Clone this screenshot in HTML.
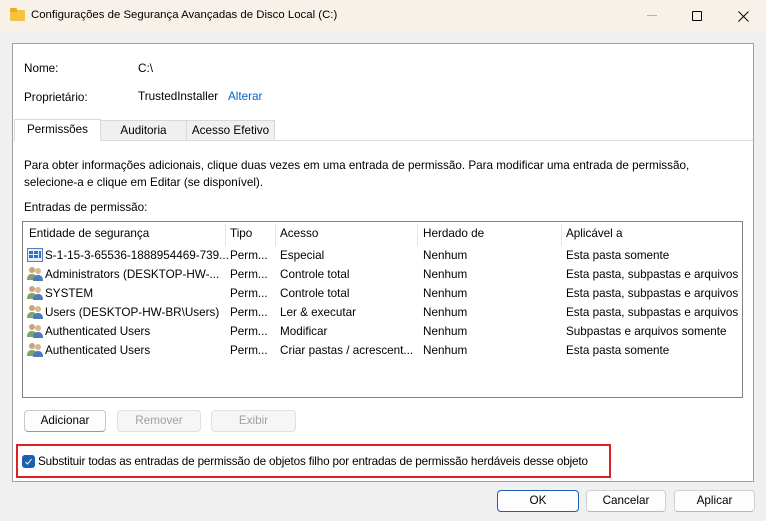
<!DOCTYPE html>
<html><head><meta charset="utf-8">
<style>
*{box-sizing:border-box;margin:0;padding:0}
body{width:766px;height:521px;overflow:hidden;background:#f0f0f0;font-family:"Liberation Sans",sans-serif;font-size:11.7px;color:#000;position:relative}
.a{position:absolute;white-space:nowrap}
.title{left:0;top:0;width:766px;height:32px;background:#f8f1ea}
.panel{left:12px;top:43px;width:742px;height:439px;background:#fff;border:1px solid #a0a0a0}
.btn{position:absolute;height:22px;border:1px solid #d0d0d0;border-radius:4px;background:#fdfdfd;text-align:center;line-height:20px;border-bottom-color:#b8b8b8}
.dis{color:#a0a0a0;border-color:#e0e0e0;background:#f6f6f6}
.tab{position:absolute;top:120px;height:21px;line-height:20px;background:#f0f0f0;border:1px solid #d9d9d9;text-align:center}
.list{left:22px;top:221px;width:721px;height:177px;border:1px solid #828282;background:#fff}
.row{position:absolute;left:0;height:19px;line-height:19px}
</style></head><body>
<div class="a title"></div>
<div class="a" style="left:10px;top:10px;width:15px;height:11px;background:#f5c242;border-radius:1px"></div>
<div class="a" style="left:10px;top:8px;width:7px;height:4px;background:#e9ac25;border-radius:1px 1px 0 0"></div>
<div class="a" style="left:31px;top:9px;font-size:11.4px">Configurações de Segurança Avançadas de Disco Local (C:)</div>
<div class="a" style="left:647px;top:15px;width:10px;height:1px;background:#b0b0b0"></div>
<div class="a" style="left:692px;top:11px;width:10px;height:10px;border:1px solid #000;border-radius:1px"></div>
<svg class="a" style="left:738px;top:11px" width="11" height="11"><path d="M0.5 0.5L10.5 10.5M10.5 0.5L0.5 10.5" stroke="#000" stroke-width="1"/></svg>

<div class="a panel"></div>
<div class="a" style="left:24px;top:62px">Nome:</div>
<div class="a" style="left:138px;top:62px">C:\</div>
<div class="a" style="left:24px;top:91px">Proprietário:</div>
<div class="a" style="left:138px;top:90px">TrustedInstaller</div>
<div class="a" style="left:228px;top:90px;color:#0066cc">Alterar</div>

<div class="a" style="left:13px;top:140px;width:740px;height:1px;background:#d9d9d9"></div>
<div class="tab" style="left:100px;width:87px">Auditoria</div>
<div class="tab" style="left:186px;width:89px">Acesso Efetivo</div>
<div class="tab" style="left:14px;width:87px;background:#fff;border-bottom-color:#fff;top:119px;height:22px">Permissões</div>

<div class="a" style="left:24px;top:157px;line-height:17px">Para obter informações adicionais, clique duas vezes em uma entrada de permissão. Para modificar uma entrada de permissão,<br>selecione-a e clique em Editar (se disponível).</div>
<div class="a" style="left:24px;top:201px">Entradas de permissão:</div>

<div class="a list">
 <div class="row" style="top:2px;left:6px">Entidade de segurança</div>
 <div class="row" style="top:2px;left:207px">Tipo</div>
 <div class="row" style="top:2px;left:257px">Acesso</div>
 <div class="row" style="top:2px;left:400px">Herdado de</div>
 <div class="row" style="top:2px;left:543px">Aplicável a</div>
 <div class="a" style="left:202px;top:2px;width:1px;height:22px;background:#e5e5e5"></div>
 <div class="a" style="left:252px;top:2px;width:1px;height:22px;background:#e5e5e5"></div>
 <div class="a" style="left:394px;top:2px;width:1px;height:22px;background:#e5e5e5"></div>
 <div class="a" style="left:538px;top:2px;width:1px;height:22px;background:#e5e5e5"></div>
</div>
<div class="a" style="left:23px;top:246px;width:720px">
 <div class="row" style="top:0;left:22px">S-1-15-3-65536-1888954469-739...</div><div class="row" style="top:0;left:207px">Perm...</div><div class="row" style="top:0;left:257px">Especial</div><div class="row" style="top:0;left:400px">Nenhum</div><div class="row" style="top:0;left:543px">Esta pasta somente</div>
 <div class="row" style="top:19px;left:22px">Administrators (DESKTOP-HW-...</div><div class="row" style="top:19px;left:207px">Perm...</div><div class="row" style="top:19px;left:257px">Controle total</div><div class="row" style="top:19px;left:400px">Nenhum</div><div class="row" style="top:19px;left:543px">Esta pasta, subpastas e arquivos</div>
 <div class="row" style="top:38px;left:22px">SYSTEM</div><div class="row" style="top:38px;left:207px">Perm...</div><div class="row" style="top:38px;left:257px">Controle total</div><div class="row" style="top:38px;left:400px">Nenhum</div><div class="row" style="top:38px;left:543px">Esta pasta, subpastas e arquivos</div>
 <div class="row" style="top:57px;left:22px">Users (DESKTOP-HW-BR\Users)</div><div class="row" style="top:57px;left:207px">Perm...</div><div class="row" style="top:57px;left:257px">Ler &amp; executar</div><div class="row" style="top:57px;left:400px">Nenhum</div><div class="row" style="top:57px;left:543px">Esta pasta, subpastas e arquivos</div>
 <div class="row" style="top:76px;left:22px">Authenticated Users</div><div class="row" style="top:76px;left:207px">Perm...</div><div class="row" style="top:76px;left:257px">Modificar</div><div class="row" style="top:76px;left:400px">Nenhum</div><div class="row" style="top:76px;left:543px">Subpastas e arquivos somente</div>
 <div class="row" style="top:95px;left:22px">Authenticated Users</div><div class="row" style="top:95px;left:207px">Perm...</div><div class="row" style="top:95px;left:257px">Criar pastas / acrescent...</div><div class="row" style="top:95px;left:400px">Nenhum</div><div class="row" style="top:95px;left:543px">Esta pasta somente</div>
</div>
<svg class="a" style="left:27px;top:248px" width="16" height="115">
 <rect x="0.5" y="0.5" width="15" height="13" fill="#e8eef8" stroke="#5a7fb5"/>
 <rect x="2" y="3" width="4" height="3" fill="#2f6fd0"/><rect x="7" y="3" width="4" height="3" fill="#2f6fd0"/><rect x="2" y="7" width="4" height="3" fill="#2f6fd0"/><rect x="7" y="7" width="4" height="3" fill="#2f6fd0"/><rect x="12" y="3" width="2" height="7" fill="#2f6fd0"/>
 <g id="u"><circle cx="5" cy="22" r="3" fill="#c9a67a"/><path d="M0 32q0-6 5-6t5 6z" fill="#7fa46a"/><circle cx="11" cy="23" r="3" fill="#d8b88c"/><path d="M6 33q0-6 5-6t5 6z" fill="#4d7ab8"/></g>
 <use href="#u" y="19"/><use href="#u" y="38"/><use href="#u" y="57"/><use href="#u" y="76"/>
</svg>

<div class="btn" style="left:24px;top:410px;width:82px;border-color:#c8c8c8 #c8c8c8 #9a9a9a">Adicionar</div>
<div class="btn dis" style="left:117px;top:410px;width:84px">Remover</div>
<div class="btn dis" style="left:211px;top:410px;width:85px">Exibir</div>

<div class="a" style="left:16px;top:444px;width:595px;height:34px;border:2px solid #e02020"></div>
<div class="a" style="left:22px;top:455px;width:13px;height:13px;background:#1a5fb4;border-radius:3px"></div>
<svg class="a" style="left:24px;top:457px" width="9" height="9"><path d="M1.5 5l2 2 4-5" stroke="#fff" stroke-width="1" fill="none"/></svg>
<div class="a" style="left:38px;top:455px;letter-spacing:-0.15px">Substituir todas as entradas de permissão de objetos filho por entradas de permissão herdáveis desse objeto</div>

<div class="btn" style="left:497px;top:490px;width:82px;border:1px solid #1a5fb4">OK</div>
<div class="btn" style="left:586px;top:490px;width:80px">Cancelar</div>
<div class="btn" style="left:674px;top:490px;width:81px">Aplicar</div>
</body></html>
